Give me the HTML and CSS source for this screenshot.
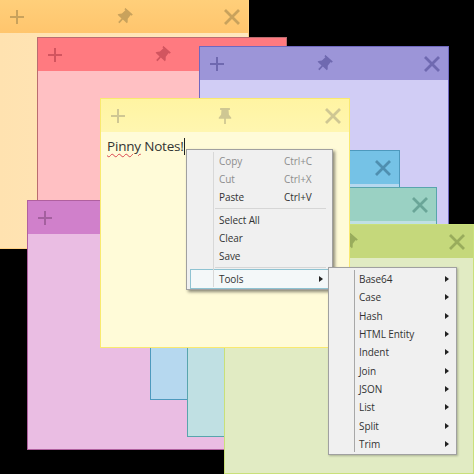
FILE: index.html
```html
<!DOCTYPE html>
<html lang="en">
<head>
<meta charset="utf-8">
<title>Pinny Notes</title>
<link rel="stylesheet" href="styles.css">
</head>
<body>
<svg class="sprite" width="0" height="0" aria-hidden="true">
  <symbol id="i-plus" viewBox="0 0 14 14"><path d="M7 0V14M0 7H14" fill="none" stroke="currentColor" stroke-width="2"/></symbol>
  <symbol id="i-close" viewBox="0 0 16 16"><path d="M1 1L15 15M15 1L1 15" fill="none" stroke="currentColor" stroke-width="2.8"/></symbol>
  <symbol id="i-pin" viewBox="0 0 16 18"><path d="M2.5 0H13.5V2.2H12L12.4 7.6L15 10.6V12H9V18H7V12H1V10.6L3.6 7.6L4 2.2H2.5Z" fill="currentColor"/></symbol>
</svg>

<main class="desk">
  <section class="note orange"><header class="bar"><svg class="ico plus"><use href="#i-plus"/></svg><svg class="ico pin tilted"><use href="#i-pin"/></svg><svg class="ico close"><use href="#i-close"/></svg></header><div class="body"></div></section>
  <section class="note red"><header class="bar"><svg class="ico plus"><use href="#i-plus"/></svg><svg class="ico pin tilted"><use href="#i-pin"/></svg><svg class="ico close"><use href="#i-close"/></svg></header><div class="body"></div></section>
  <section class="note violet"><header class="bar"><svg class="ico plus"><use href="#i-plus"/></svg><svg class="ico pin tilted"><use href="#i-pin"/></svg><svg class="ico close"><use href="#i-close"/></svg></header><div class="body"></div></section>
  <section class="note pink"><header class="bar"><svg class="ico plus"><use href="#i-plus"/></svg><svg class="ico pin tilted"><use href="#i-pin"/></svg><svg class="ico close"><use href="#i-close"/></svg></header><div class="body"></div></section>
  <section class="note blue"><header class="bar"><svg class="ico plus"><use href="#i-plus"/></svg><svg class="ico pin tilted"><use href="#i-pin"/></svg><svg class="ico close"><use href="#i-close"/></svg></header><div class="body"></div></section>
  <section class="note teal"><header class="bar"><svg class="ico plus"><use href="#i-plus"/></svg><svg class="ico pin tilted"><use href="#i-pin"/></svg><svg class="ico close"><use href="#i-close"/></svg></header><div class="body"></div></section>
  <section class="note green"><header class="bar"><svg class="ico plus"><use href="#i-plus"/></svg><svg class="ico pin tilted"><use href="#i-pin"/></svg><svg class="ico close"><use href="#i-close"/></svg></header><div class="body"></div></section>
  <section class="note yellow"><header class="bar"><svg class="ico plus"><use href="#i-plus"/></svg><svg class="ico pin"><use href="#i-pin"/></svg><svg class="ico close"><use href="#i-close"/></svg></header><div class="body"><p class="text"><span class="misspelt">Pinny</span> Notes!<span class="caret"></span></p></div></section>

  <nav class="menu main-menu">
    <div class="row off"><span class="label">Copy</span><span class="key">Ctrl+C</span></div>
    <div class="row off"><span class="label">Cut</span><span class="key">Ctrl+X</span></div>
    <div class="row"><span class="label">Paste</span><span class="key">Ctrl+V</span></div>
    <div class="sep"></div>
    <div class="row"><span class="label">Select All</span></div>
    <div class="row"><span class="label">Clear</span></div>
    <div class="row"><span class="label">Save</span></div>
    <div class="sep last"></div>
    <div class="row active"><span class="label">Tools</span><span class="arrow"></span></div>
  </nav>

  <nav class="menu sub-menu">
    <div class="row"><span class="label">Base64</span><span class="arrow"></span></div>
    <div class="row"><span class="label">Case</span><span class="arrow"></span></div>
    <div class="row"><span class="label">Hash</span><span class="arrow"></span></div>
    <div class="row"><span class="label">HTML Entity</span><span class="arrow"></span></div>
    <div class="row"><span class="label">Indent</span><span class="arrow"></span></div>
    <div class="row"><span class="label">Join</span><span class="arrow"></span></div>
    <div class="row"><span class="label">JSON</span><span class="arrow"></span></div>
    <div class="row"><span class="label">List</span><span class="arrow"></span></div>
    <div class="row"><span class="label">Split</span><span class="arrow"></span></div>
    <div class="row"><span class="label">Trim</span><span class="arrow"></span></div>
  </nav>
</main>
</body>
</html>
```

FILE: styles.css
```css
* { box-sizing: border-box; }
html, body { margin: 0; height: 100%; background: #000; overflow: hidden; }
body { font-family: "Open Sans", "Noto Sans", sans-serif; color: #222; }
.sprite { position: absolute; }
.desk { position: relative; width: 474px; height: 474px; overflow: hidden; }

/* Notes: free-floating windows */
.note { position: absolute; width: 250px; height: 250px; display: flex; flex-direction: column; border: 1px solid var(--edge); background: var(--paper); }
.bar { height: 33px; flex: none; display: flex; align-items: center; justify-content: space-between; padding: 0 8px 0 10px; background: var(--head); color: var(--ink); }
.body { flex: 1; }
.ico { display: block; width: 16px; height: 16px; }
.ico.plus { width: 14px; height: 14px; }
.pin.tilted { transform: rotate(42deg); }

.orange { left: -1px; top: -1px; --edge: #ffd083; --head: linear-gradient(#ffcf7a, #ffc56d); --paper: linear-gradient(90deg, #ffe2b0, #ffe8c0); --ink: #c9a25c; }
.red { left: 37px; top: 37px; --edge: #b96c70; --head: #ff7a80; --paper: #ffc0c3; --ink: #d2555f; }
.violet { left: 199px; top: 46px; --edge: #6f68c0; --head: #9c95d8; --paper: #d1cdf5; --ink: #6f69b0; }
.pink { left: 27px; top: 200px; --edge: #b0609f; --head: #d080cb; --paper: #eabde3; --ink: #a4609f; }
.blue { left: 150px; top: 150px; --edge: #4d99bd; --head: #75c2e6; --paper: #b6d8ef; --ink: #4f8fb0; }
.teal { left: 187px; top: 187px; --edge: #58a5ad; --head: #9ad1c3; --paper: #c0e0e3; --ink: #6aa598; }
.green { left: 224px; top: 224px; --edge: #c9e07a; --head: #c5d87b; --paper: #e1ebc3; --ink: #99ac5c; }
.yellow { left: 100px; top: 98px; --edge: #f9e96f; --head: linear-gradient(#fff4a2, #fff6b0); --paper: #fffbd8; --ink: #cfc793; }

.text { margin: 0; padding: 4px 6px; font-size: 13.5px; letter-spacing: -.2px; line-height: 20px; color: #333; white-space: nowrap; }
.misspelt { text-decoration: underline wavy #d9474f 1px; text-underline-offset: 2px; }
.caret { display: inline-block; width: 1px; height: 17px; vertical-align: -4px; background: #222; }

/* Context menus */
.menu { position: absolute; display: flex; flex-direction: column; background: #f0f0f0; border: 1px solid #a0a0a0; box-shadow: 2px 2px 3px rgba(0,0,0,.45); font-size: 10px; letter-spacing: -.08px; }
.menu::before { content: ""; position: absolute; top: 2px; bottom: 2px; width: 1px; background: #d8d8d8; }
.main-menu { left: 186px; top: 149px; width: 147px; height: 141px; padding: 2px 0 0; }
.main-menu::before { left: 26px; }
.sub-menu { left: 328px; top: 267px; width: 129px; height: 188px; padding: 2px 0 0; box-shadow: 1px 1px 2px rgba(0,0,0,.25); }
.sub-menu::before { left: 25px; background: #a8a8a8; }

.row { height: 18.3px; display: flex; align-items: center; padding: 0 8px 0 32px; color: #333; }
.sub-menu .row { padding: 0 7px 0 30px; }
.label { flex: 1; }
.key { width: 40px; }
.off { color: #8d8d8d; }
.sep { height: 1px; margin: 1.5px 6px 1.5px 28px; background: #d6d6d6; }
.sep.last { margin: 1.5px 6px 1.5px 28px; }
.active { height: 20px; margin: 0 0 0 3px; padding: 0 8px 0 28px; border: 1px solid #8fc3d2; background: #f4f8f9; }
.arrow { width: 0; height: 0; border-left: 4px solid #222; border-top: 3.5px solid transparent; border-bottom: 3.5px solid transparent; }
```
